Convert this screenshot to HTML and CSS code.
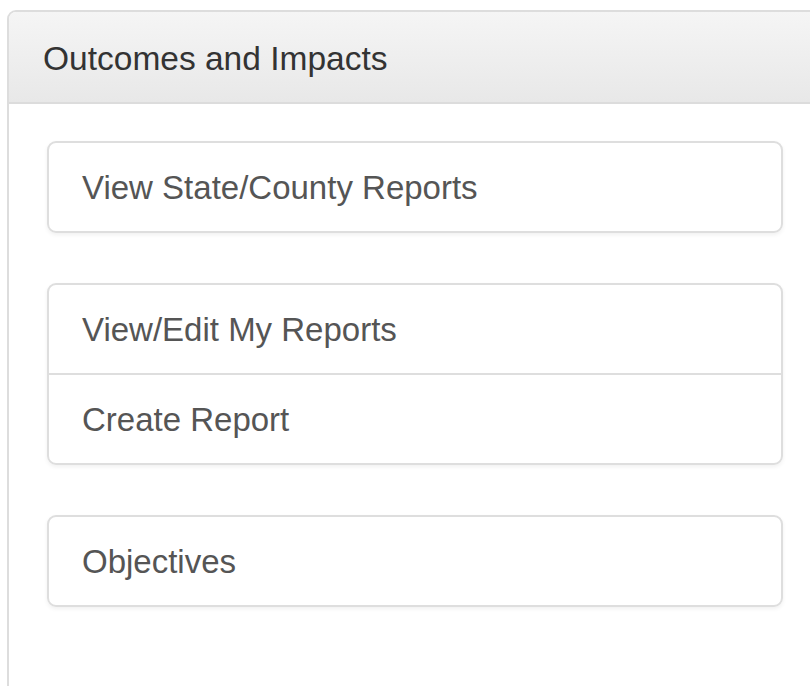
FILE: index.html
```html
<!DOCTYPE html>
<html lang="en">
<head>
<meta charset="utf-8">
<title>Outcomes and Impacts</title>
<link rel="stylesheet" href="styles.css">
</head>
<body>
  <section class="panel">
    <header class="panel-heading">Outcomes and Impacts</header>
    <div class="panel-body">
      <ul class="list-group">
        <li class="list-group-item">View State/County Reports</li>
      </ul>
      <ul class="list-group">
        <li class="list-group-item">View/Edit My Reports</li>
        <li class="list-group-item">Create Report</li>
      </ul>
      <ul class="list-group">
        <li class="list-group-item">Objectives</li>
      </ul>
    </div>
  </section>
</body>
</html>
```

FILE: styles.css
```css
html, body {
  margin: 0;
  background: #ffffff;
  overflow: hidden;
}

body {
  padding: 10px 0 0 7px;
  font-family: "Liberation Sans", Arial, sans-serif;
  font-size: 33px;
}

/* panel is wider than the window; its right edge sits off-screen */
.panel {
  width: 816px;
  height: 676px;
  box-sizing: border-box;
  border: 2px solid #dddddd;
  border-bottom: 0;
  border-radius: 9px 9px 0 0;
  background: #ffffff;
}

.panel-heading {
  height: 87px;
  display: flex;
  align-items: center;
  padding: 3px 34px 0;
  color: #333333;
  font-size: 33.5px;
  border-bottom: 2px solid #dcdcdc;
  border-radius: 7px 7px 0 0;
  background: linear-gradient(to bottom, #f5f5f5 0%, #e8e8e8 100%);
}

.panel-body {
  padding: 37px 38px 0;
}

.list-group {
  list-style: none;
  margin: 0 0 50px;
  padding: 0;
  border: 2px solid #dedede;
  border-radius: 9px;
  box-shadow: 0 2px 4px rgba(0, 0, 0, 0.06);
}

.list-group-item {
  height: 88px;
  display: flex;
  align-items: center;
  padding: 2px 33px 0;
  box-sizing: border-box;
  color: #555555;
}

.list-group-item + .list-group-item {
  border-top: 2px solid #dedede;
  height: 90px;
}
```
